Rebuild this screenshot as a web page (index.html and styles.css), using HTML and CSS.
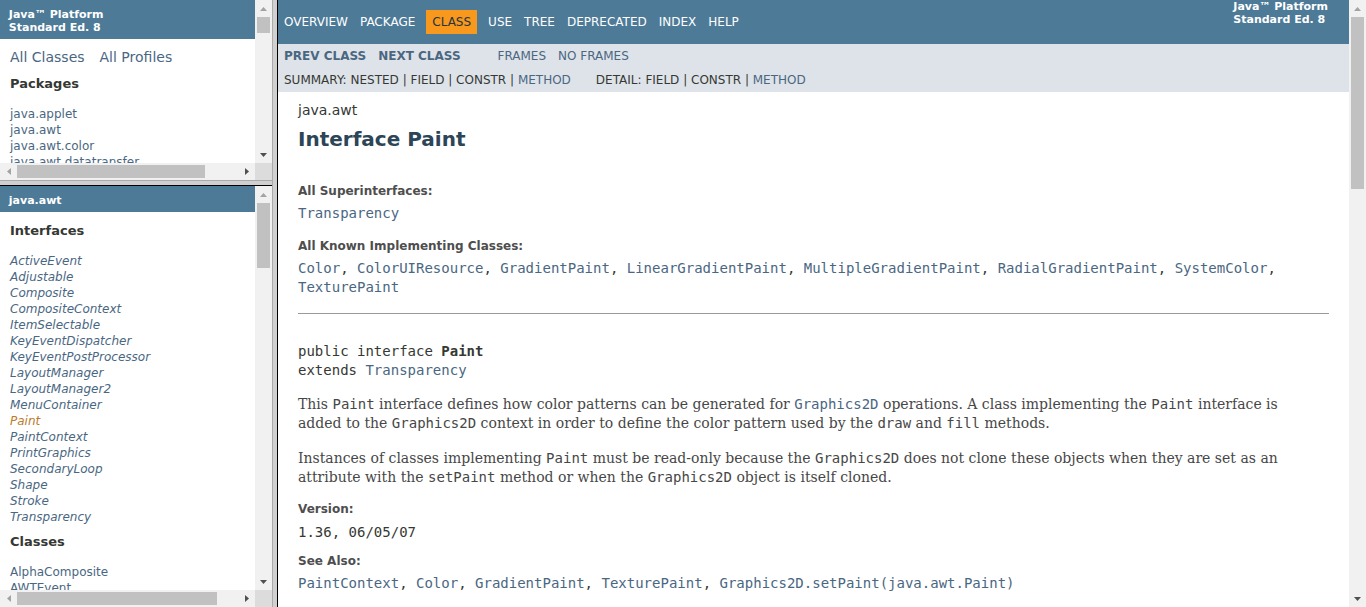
FILE: index.html
```html
<!DOCTYPE html>
<html lang="en">
<head>
<meta charset="utf-8">
<title>Paint (Java Platform SE 8)</title>
<link rel="stylesheet" href="styles.css">
</head>
<body>
<div class="frames">
  <div class="sidebar">
    <div class="frame frame-packages">
      <div class="view">
        <h1 class="bar"><strong>Java™ Platform<br>Standard Ed. 8</strong></h1>
        <div class="indexHeader"><span><a href="#">All Classes</a></span><span><a href="#">All Profiles</a></span></div>
        <div class="indexContainer">
          <h2>Packages</h2>
          <ul class="packages">
            <li><a href="#">java.applet</a></li>
            <li><a href="#">java.awt</a></li>
            <li><a href="#">java.awt.color</a></li>
            <li><a href="#">java.awt.datatransfer</a></li>
            <li><a href="#">java.awt.dnd</a></li>
            <li><a href="#">java.awt.event</a></li>
            <li><a href="#">java.awt.font</a></li>
          </ul>
        </div>
      </div>
      <div class="vscroll">
        <div class="sb-btn"><svg class="tri" width="7" height="4" viewBox="0 0 7 4"><path d="M3.5 0L7 4H0z" fill="#a3a3a3"/></svg></div>
        <div class="track"><div class="vthumb thumb-packages"></div></div>
        <div class="sb-btn"><svg class="tri" width="7" height="4" viewBox="0 0 7 4"><path d="M0 0H7L3.5 4z" fill="#505050"/></svg></div>
      </div>
      <div class="hscroll">
        <div class="sb-btn"><svg class="tri" width="4" height="7" viewBox="0 0 4 7"><path d="M4 0V7L0 3.5z" fill="#a3a3a3"/></svg></div>
        <div class="track"><div class="hthumb hthumb-packages"></div></div>
        <div class="sb-btn"><svg class="tri" width="4" height="7" viewBox="0 0 4 7"><path d="M0 0L4 3.5L0 7z" fill="#505050"/></svg></div>
      </div>
      <div class="corner"></div>
    </div>
    <div class="hborder"></div>
    <div class="frame frame-classes">
      <div class="view">
        <h1 class="bar"><a href="#">java.awt</a></h1>
        <div class="indexContainer">
          <h2>Interfaces</h2>
          <ul>
            <li><a href="#" class="iface">ActiveEvent</a></li>
            <li><a href="#" class="iface">Adjustable</a></li>
            <li><a href="#" class="iface">Composite</a></li>
            <li><a href="#" class="iface">CompositeContext</a></li>
            <li><a href="#" class="iface">ItemSelectable</a></li>
            <li><a href="#" class="iface">KeyEventDispatcher</a></li>
            <li><a href="#" class="iface">KeyEventPostProcessor</a></li>
            <li><a href="#" class="iface">LayoutManager</a></li>
            <li><a href="#" class="iface">LayoutManager2</a></li>
            <li><a href="#" class="iface">MenuContainer</a></li>
            <li><a href="#" class="iface current">Paint</a></li>
            <li><a href="#" class="iface">PaintContext</a></li>
            <li><a href="#" class="iface">PrintGraphics</a></li>
            <li><a href="#" class="iface">SecondaryLoop</a></li>
            <li><a href="#" class="iface">Shape</a></li>
            <li><a href="#" class="iface">Stroke</a></li>
            <li><a href="#" class="iface">Transparency</a></li>
          </ul>
          <h2>Classes</h2>
          <ul>
            <li><a href="#">AlphaComposite</a></li>
            <li><a href="#">AWTEvent</a></li>
            <li><a href="#">AWTEventMulticaster</a></li>
            <li><a href="#">AWTKeyStroke</a></li>
          </ul>
        </div>
      </div>
      <div class="vscroll">
        <div class="sb-btn"><svg class="tri" width="7" height="4" viewBox="0 0 7 4"><path d="M3.5 0L7 4H0z" fill="#a3a3a3"/></svg></div>
        <div class="track"><div class="vthumb thumb-classes"></div></div>
        <div class="sb-btn"><svg class="tri" width="7" height="4" viewBox="0 0 7 4"><path d="M0 0H7L3.5 4z" fill="#505050"/></svg></div>
      </div>
      <div class="hscroll">
        <div class="sb-btn"><svg class="tri" width="4" height="7" viewBox="0 0 4 7"><path d="M4 0V7L0 3.5z" fill="#a3a3a3"/></svg></div>
        <div class="track"><div class="hthumb hthumb-classes"></div></div>
        <div class="sb-btn"><svg class="tri" width="4" height="7" viewBox="0 0 4 7"><path d="M0 0L4 3.5L0 7z" fill="#505050"/></svg></div>
      </div>
      <div class="corner"></div>
    </div>
  </div>
  <div class="vborder"></div>
  <div class="frame frame-main">
    <div class="view main">
      <div class="topNav">
        <ul class="navList">
          <li><a href="#">Overview</a></li>
          <li><a href="#">Package</a></li>
          <li class="navBarCell1Rev">Class</li>
          <li><a href="#">Use</a></li>
          <li><a href="#">Tree</a></li>
          <li><a href="#">Deprecated</a></li>
          <li><a href="#">Index</a></li>
          <li><a href="#">Help</a></li>
        </ul>
        <div class="aboutLanguage"><strong>Java™ Platform<br>Standard Ed. 8</strong></div>
      </div>
      <div class="subNav">
        <div class="row1">
          <ul class="navList">
            <li><a href="#"><span class="typeNameLink">Prev Class</span></a></li>
            <li><a href="#"><span class="typeNameLink">Next Class</span></a></li>
          </ul>
          <ul class="navList">
            <li><a href="#">Frames</a></li>
            <li><a href="#">No Frames</a></li>
          </ul>
        </div>
        <div class="row2">
          <ul class="subNavList">
            <li>Summary:&nbsp;</li>
            <li>Nested&nbsp;|&nbsp;</li>
            <li>Field&nbsp;|&nbsp;</li>
            <li>Constr&nbsp;|&nbsp;</li>
            <li><a href="#">Method</a></li>
          </ul>
          <ul class="subNavList">
            <li>Detail:&nbsp;</li>
            <li>Field&nbsp;|&nbsp;</li>
            <li>Constr&nbsp;|&nbsp;</li>
            <li><a href="#">Method</a></li>
          </ul>
        </div>
      </div>
      <div class="header">
        <div class="subTitle">java.awt</div>
        <h2 class="title">Interface Paint</h2>
      </div>
      <div class="contentContainer">
        <dl class="info first">
          <dt>All Superinterfaces:</dt>
          <dd><a href="#">Transparency</a></dd>
        </dl>
        <dl class="info">
          <dt>All Known Implementing Classes:</dt>
          <dd><a href="#">Color</a>, <a href="#">ColorUIResource</a>, <a href="#">GradientPaint</a>, <a href="#">LinearGradientPaint</a>, <a href="#">MultipleGradientPaint</a>, <a href="#">RadialGradientPaint</a>, <a href="#">SystemColor</a>, <a href="#">TexturePaint</a></dd>
        </dl>
        <hr class="rule">
        <pre class="decl">public interface <span class="typeNameLabel">Paint</span>
extends <a href="#">Transparency</a></pre>
        <div class="block">This <code>Paint</code> interface defines how color patterns can be generated for <a href="#"><code>Graphics2D</code></a> operations. A class implementing the <code>Paint</code> interface is added to the <code>Graphics2D</code> context in order to define the color pattern used by the <code>draw</code> and <code>fill</code> methods.</div>
        <div class="block next">Instances of classes implementing <code>Paint</code> must be read-only because the <code>Graphics2D</code> does not clone these objects when they are set as an attribute with the <code>setPaint</code> method or when the <code>Graphics2D</code> object is itself cloned.</div>
        <dl class="info tags">
          <dt>Version:</dt>
          <dd class="version">1.36, 06/05/07</dd>
          <dt class="next">See Also:</dt>
          <dd><a href="#">PaintContext</a>, <a href="#">Color</a>, <a href="#">GradientPaint</a>, <a href="#">TexturePaint</a>, <a href="#">Graphics2D.setPaint(java.awt.Paint)</a></dd>
        </dl>
      </div>
    </div>
    <div class="vscroll">
      <div class="sb-btn"><svg class="tri" width="7" height="4" viewBox="0 0 7 4"><path d="M3.5 0L7 4H0z" fill="#a3a3a3"/></svg></div>
      <div class="track"><div class="vthumb thumb-main"></div></div>
      <div class="sb-btn"><svg class="tri" width="7" height="4" viewBox="0 0 7 4"><path d="M0 0H7L3.5 4z" fill="#505050"/></svg></div>
    </div>
  </div>
</div>
</body>
</html>
```
FILE: styles.css
```css
html, body {
  margin: 0;
  padding: 0;
}
body {
  font-family: 'DejaVu Sans', Arial, Helvetica, sans-serif;
  font-size: 14px;
  color: #353833;
  background: #ffffff;
  overflow: hidden;
}
a {
  color: #4A6782;
  text-decoration: none;
}

/* frameset */
.frames {
  display: flex;
  width: 1366px;
  height: 607px;
}
.sidebar {
  width: 272px;
  flex: none;
  display: flex;
  flex-direction: column;
}
.vborder {
  width: 6px;
  flex: none;
  box-sizing: border-box;
  background: #d0d0d0;
  border-left: 1px solid #aaaaaa;
  border-right: 1px solid #000000;
}
.hborder {
  height: 6px;
  flex: none;
  box-sizing: border-box;
  background: #d0d0d0;
  border-top: 1px solid #aaaaaa;
  border-bottom: 1px solid #000000;
}
.frame {
  display: grid;
  grid-template-columns: minmax(0, 1fr) 17px;
  overflow: hidden;
  background: #ffffff;
}
.frame-packages {
  height: 180px;
  flex: none;
  grid-template-rows: minmax(0, 1fr) 17px;
}
.frame-classes {
  flex: 1;
  min-height: 0;
  grid-template-rows: minmax(0, 1fr) 17px;
}
.frame-main {
  flex: 1;
  min-width: 0;
  grid-template-rows: minmax(0, 1fr);
}
.view {
  overflow: hidden;
  min-height: 0;
  min-width: 0;
}

/* scrollbars */
.vscroll {
  background: #f1f1f1;
  display: flex;
  flex-direction: column;
}
.hscroll {
  background: #f1f1f1;
  display: flex;
}
.sb-btn {
  flex: none;
  height: 17px;
  display: flex;
  align-items: center;
  justify-content: center;
}
.hscroll .sb-btn {
  width: 17px;
  height: auto;
}
.tri {
  display: block;
}
.track {
  flex: 1;
  display: flex;
  flex-direction: column;
}
.hscroll .track {
  flex-direction: row;
}
.vthumb {
  margin: 0 2px;
  background: #c1c1c1;
}
.hthumb {
  margin: 2px 0;
  background: #c1c1c1;
}
.thumb-packages { height: 16px; }
.thumb-classes { height: 65px; }
.thumb-main { height: 172px; }
.hthumb-packages { width: 188px; }
.hthumb-classes { width: 200px; }
.corner {
  background: #dcdcdc;
}

/* side frames */
.bar {
  background: #4D7A97;
  color: #ffffff;
  font-size: 11px;
  font-weight: bold;
  line-height: 12.8px;
  padding: 8.8px 5.5px 4.4px 8.8px;
  margin: 0;
  white-space: nowrap;
}
.bar a {
  color: #ffffff;
}
.indexHeader {
  margin: 10px;
  display: flex;
  gap: 15px;
  white-space: nowrap;
}
.indexContainer {
  margin: 10px;
  font-size: 12px;
  white-space: nowrap;
}
.indexContainer h2 {
  font-size: 13px;
  line-height: 15px;
  margin: 10.8px 0;
  padding: 0 0 3px 0;
}
.indexContainer ul {
  margin: 0;
  padding: 0;
  list-style: none;
}
.indexContainer ul.packages {
  padding-top: 1px;
}
.indexContainer li {
  padding-top: 2px;
  line-height: 14px;
}
.iface {
  font-style: italic;
}
.iface.current {
  color: #bb7a2a;
}

/* main frame */
.topNav {
  background: #4D7A97;
  color: #ffffff;
  height: 44px;
  box-sizing: border-box;
  padding-top: 10px;
  font-size: 12px;
  display: flex;
  justify-content: space-between;
  align-items: flex-start;
}
.topNav a {
  color: #ffffff;
}
.navList {
  display: flex;
  margin: 0 25px 0 0;
  padding: 0;
  list-style: none;
}
.navList li {
  padding: 5px 6px;
  line-height: 14px;
  text-transform: uppercase;
}
.navBarCell1Rev {
  background: #F8981D;
  color: #253441;
  margin: 0 5px;
}
.aboutLanguage {
  font-size: 11px;
  font-weight: bold;
  line-height: 12.8px;
  padding: 0 21px;
  margin-top: -9px;
  white-space: nowrap;
}
.subNav {
  background: #dee3e9;
  height: 48px;
  font-size: 12px;
}
.row1 {
  display: flex;
}
.typeNameLink {
  font-weight: bold;
}
.row2 {
  display: flex;
  padding: 5px 0 4px 6px;
  text-transform: uppercase;
  line-height: 14px;
}
.subNavList {
  display: flex;
  margin: 0 25px 0 0;
  padding: 0;
  list-style: none;
  white-space: pre;
}
.header {
  margin: 0 20px;
  padding-top: 5px;
}
.subTitle {
  margin-top: 5px;
  line-height: 16px;
}
.title {
  color: #2c4557;
  font-size: 20px;
  line-height: 24px;
  margin: 9px 0 0 0;
}
.contentContainer {
  padding: 0 20px;
}
.info {
  margin: 16px 0 0 0;
}
.info.first {
  margin-top: 33px;
}
.info.tags {
  margin-top: 15px;
}
.info dt {
  font-size: 12px;
  font-weight: bold;
  line-height: 14px;
  color: #4E4E4E;
  margin: 0;
}
.info dt.next {
  margin-top: 12px;
}
.info dd {
  margin: 6px 0 0 0;
  font-family: 'DejaVu Sans Mono', monospace;
  font-size: 14px;
  line-height: 19px;
}
.info dd.version {
  margin-top: 7px;
}
.rule {
  border: 0;
  border-top: 1px solid #9a9a9a;
  height: 0;
  margin: 16px 0 0 0;
}
.decl {
  font-family: 'DejaVu Sans Mono', monospace;
  font-size: 14px;
  line-height: 19px;
  margin: 28px 0 0 0;
}
.typeNameLabel {
  font-weight: bold;
}
.block {
  font-family: 'DejaVu Serif', Georgia, 'Times New Roman', serif;
  font-size: 14px;
  line-height: 19px;
  color: #474747;
  margin: 15px 10px 0 0;
}
.block.next {
  margin-top: 16px;
}
code {
  font-family: 'DejaVu Sans Mono', monospace;
  font-size: 14px;
}
```
